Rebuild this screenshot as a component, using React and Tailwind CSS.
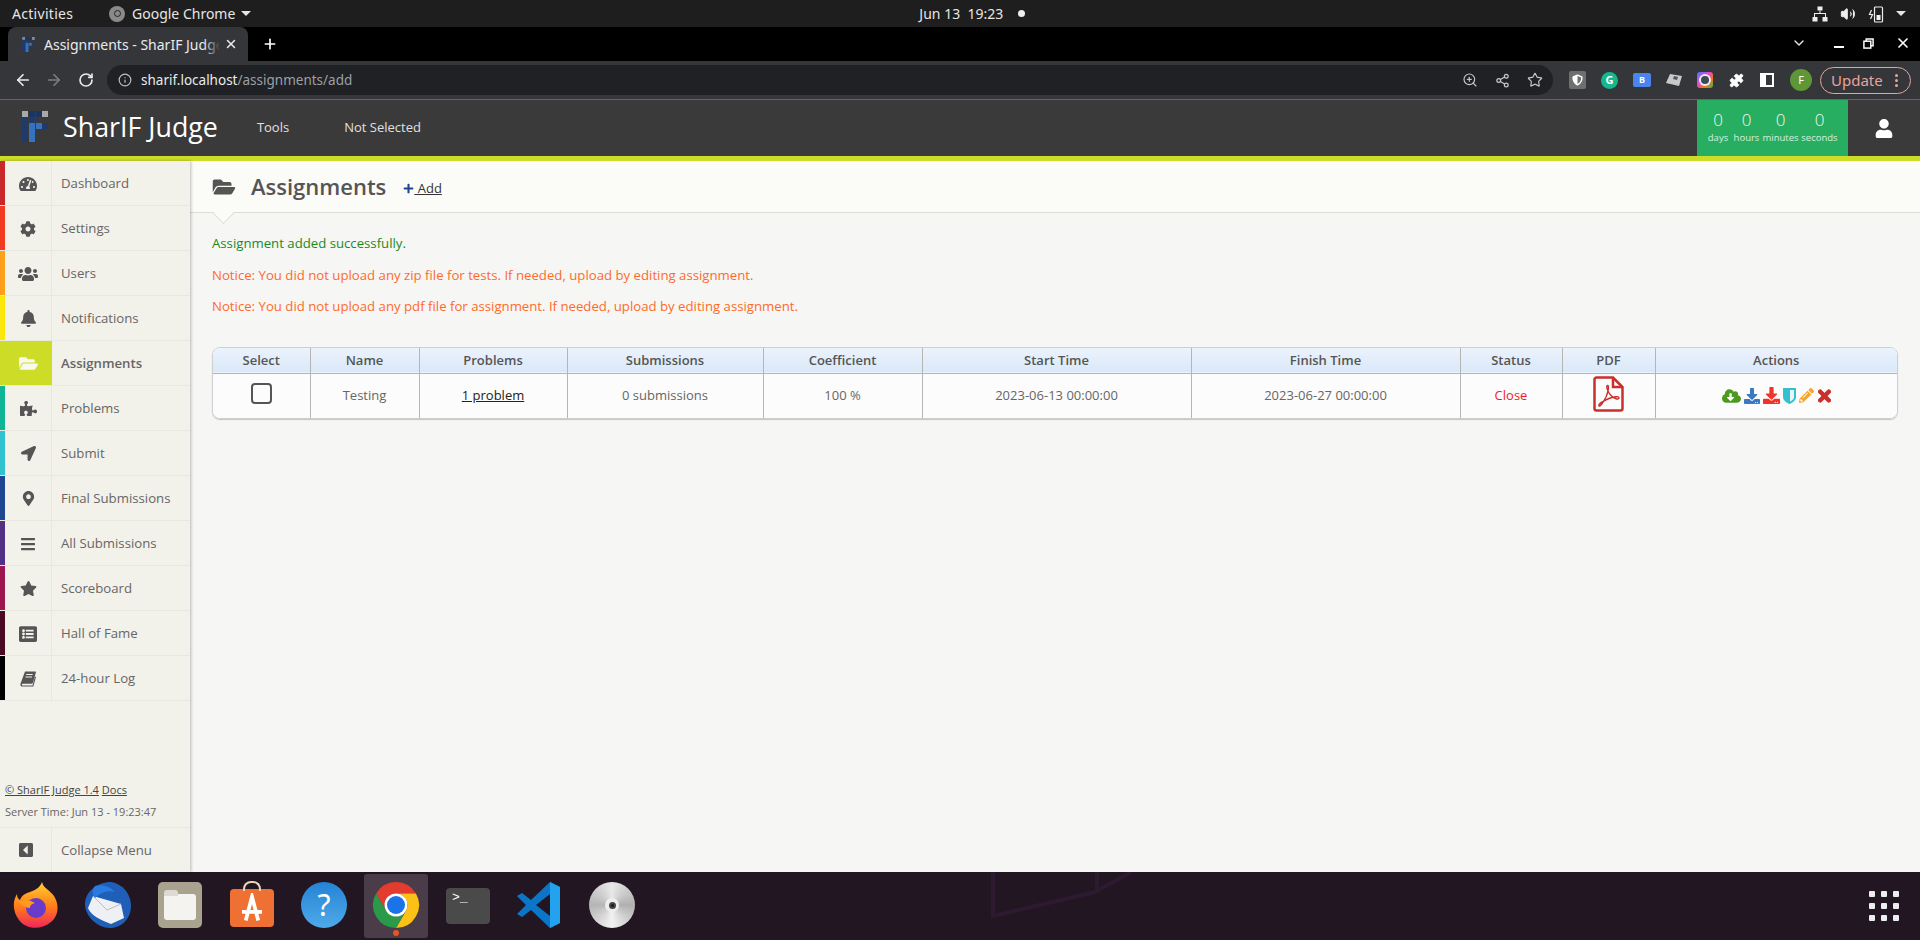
import {
  FaBars,
  FaBell,
  FaCaretSquareLeft,
  FaCloudDownloadAlt,
  FaCog,
  FaDownload,
  FaFolderOpen,
  FaListAlt,
  FaLocationArrow,
  FaMapMarkerAlt,
  FaPencilAlt,
  FaPlus,
  FaPuzzlePiece,
  FaShieldAlt,
  FaStar,
  FaTachometerAlt,
  FaTimes,
  FaUser,
  FaUsers,
} from "react-icons/fa";
import {
  ArrowLeft,
  ArrowRight,
  ChevronDown,
  Info,
  Plus,
  Puzzle,
  RotateCw,
  Share2,
  Star,
  Volume2,
  X,
  ZoomIn,
} from "lucide-react";

const sans = "font-['Open_Sans',sans-serif]";
const ui = "font-['Noto_Sans',sans-serif]";

function BookIcon({ size }) {
  return (
    <svg viewBox="0 0 16 16" width={size} height={size} fill="currentColor">
      <path d="M5 .5h10.200c.5 0 .8.4.7.9L13 11.500c-.2.8-.9 1.300-1.700 1.300H3.200c-.9 0-1.400.4-1.400.9s.5.8 1.400.8h9.300l2.500-9 1 .4-2.700 9.700H2.800C1.200 15.600 0 14.600.4 13z" />
      <path d="M6.200 3.500h6.500M5.500 6h6.500" stroke="#f2f1ea" strokeWidth="1" />
    </svg>
  );
}

const menu = [
  { label: "Dashboard", Icon: FaTachometerAlt, strip: "bg-[#c9282b]", size: 18 },
  { label: "Settings", Icon: FaCog, strip: "bg-[#f33b22]", size: 16 },
  { label: "Users", Icon: FaUsers, strip: "bg-[#ff9f1a]", size: 20 },
  { label: "Notifications", Icon: FaBell, strip: "bg-[#fbe80a]", size: 17 },
  { label: "Assignments", Icon: FaFolderOpen, strip: "bg-[#cddc27]", size: 19, active: true },
  { label: "Problems", Icon: FaPuzzlePiece, strip: "bg-[#10b595]", size: 17 },
  { label: "Submit", Icon: FaLocationArrow, strip: "bg-[#30c2cf]", size: 15 },
  { label: "Final Submissions", Icon: FaMapMarkerAlt, strip: "bg-[#1f4690]", size: 15 },
  { label: "All Submissions", Icon: FaBars, strip: "bg-[#532f85]", size: 16 },
  { label: "Scoreboard", Icon: FaStar, strip: "bg-[#9c1750]", size: 17 },
  { label: "Hall of Fame", Icon: FaListAlt, strip: "bg-[#4a0a20]", size: 18 },
  { label: "24-hour Log", Icon: BookIcon, strip: "bg-black", size: 16 },
];

const columns = [
  { label: "Select", width: "w-[97px]" },
  { label: "Name", width: "w-[109px]" },
  { label: "Problems", width: "w-[148px]" },
  { label: "Submissions", width: "w-[196px]" },
  { label: "Coefficient", width: "w-[159px]" },
  { label: "Start Time", width: "w-[269px]" },
  { label: "Finish Time", width: "w-[269px]" },
  { label: "Status", width: "w-[102px]" },
  { label: "PDF", width: "w-[93px]" },
  { label: "Actions", width: "" },
];

function Logo({ small }) {
  const dark = "#1f3a6b";
  const blue = "#3672bd";
  const grey = small ? "#7d8aa0" : "#a9a9a9";
  return (
    <svg viewBox="0 0 26 31" className={small ? "h-[15px] w-[13px]" : "h-[31px] w-[26px]"}>
      <rect x="0" y="0" width="6" height="6" fill={grey} />
      <rect x="7" y="0" width="6" height="6" fill="#1c3560" />
      <rect x="14" y="0" width="6" height="6" fill="#1c3560" />
      <rect x="20" y="0" width="6" height="6" fill={grey} />
      <rect x="0" y="6" width="6" height="25" fill={dark} />
      <rect x="7" y="6" width="6" height="6" fill={dark} />
      <rect x="7" y="12" width="6" height="19" fill={blue} />
      <rect x="14" y="12" width="6" height="6" fill={blue} />
      <rect x="20" y="12" width="6" height="6" fill={dark} />
    </svg>
  );
}

function SystemBar() {
  return (
    <div className={`flex h-[27px] items-center bg-[#1e1e1e] pl-[12px] pr-[14px] text-[14px] text-[#e6e6e6] ${ui}`}>
      <span className="w-[97px] tracking-[0.3px]">Activities</span>
      <span className="flex h-[16px] w-[16px] items-center justify-center rounded-full bg-[#8a8a8a]">
        <span className="h-[7px] w-[7px] rounded-full border border-[#222]" />
      </span>
      <span className="ml-[7px]">Google Chrome</span>
      <span className="ml-[6px] h-0 w-0 border-x-[5px] border-t-[5px] border-x-transparent border-t-[#e6e6e6]" />
      <span className="ml-[668px]">Jun 13&nbsp;&nbsp;19:23</span>
      <span className="ml-[15px] h-[7px] w-[7px] rounded-full bg-[#eee]" />
      <div className="ml-auto flex items-center gap-[12px]">
        <svg viewBox="0 0 16 16" className="h-[16px] w-[16px]" fill="#eee">
          <rect x="5.5" y="0.5" width="5" height="4" />
          <rect x="0.5" y="11" width="5" height="4.5" />
          <rect x="10.5" y="11" width="5" height="4.5" />
          <path d="M7.5 4.5h1V7H14v4h-1V8H3v3H2V7h5.5z" />
        </svg>
        <Volume2 className="h-[16px] w-[16px]" fill="#eee" strokeWidth={1.5} />
        <svg viewBox="0 0 16 18" className="h-[18px] w-[16px]" fill="none" stroke="#eee" strokeWidth="1.2">
          <rect x="6.5" y="2" width="8" height="15" rx="1" />
          <rect x="8.5" y="10" width="4" height="5" fill="#eee" stroke="none" />
          <path d="M3.5 5 1.5 9.500h3L2.500 14" />
        </svg>
        <span className="h-0 w-0 border-x-[5px] border-t-[5px] border-x-transparent border-t-[#e6e6e6]" />
      </div>
    </div>
  );
}

function TabStrip() {
  return (
    <div className={`flex h-[34px] items-end bg-black pl-[8px] text-[#e8eaed] ${ui}`}>
      <div className="flex h-[34px] w-[240px] items-center rounded-t-[8px] bg-[#35363a] pl-[14px] pr-[10px] text-[14px]">
        <Logo small />
        <span className="relative ml-[9px] w-[176px] overflow-hidden whitespace-nowrap">
          Assignments - SharIF Judge
          <span className="absolute inset-y-0 right-0 w-[16px] bg-gradient-to-r from-transparent to-[#35363a]" />
        </span>
        <X className="ml-auto h-[14px] w-[14px]" strokeWidth={2.5} />
      </div>
      <Plus className="mb-[9px] ml-[14px] h-[16px] w-[16px] text-white" strokeWidth={2.5} />
      <div className="mb-[10px] ml-auto flex items-center">
        <ChevronDown className="mr-[27px] h-[16px] w-[16px]" strokeWidth={2} />
        <span className="mr-[19px] mt-[8px] h-[2px] w-[10px] bg-white" />
        <svg viewBox="0 0 12 12" className="mr-[21px] h-[11px] w-[11px]" fill="none" stroke="#fff" strokeWidth="1.6">
          <rect x="1" y="3.500" width="7.500" height="7.500" />
          <path d="M3.500 3.500V1H11v7.500H8.500" />
        </svg>
        <X className="mr-[9px] h-[16px] w-[16px] text-white" strokeWidth={2.5} />
      </div>
    </div>
  );
}

function Toolbar() {
  return (
    <div className={`flex h-[39px] items-center border-b border-[#666] bg-[#35363a] pl-[14px] pr-[9px] ${ui}`}>
      <ArrowLeft className="h-[18px] w-[18px] text-[#e8eaed]" strokeWidth={2.25} />
      <ArrowRight className="ml-[13px] h-[18px] w-[18px] text-[#7d7e82]" strokeWidth={2.25} />
      <RotateCw className="ml-[15px] h-[16px] w-[16px] text-[#e8eaed]" strokeWidth={2.5} />
      <div className="ml-[13px] flex h-[30px] w-[1446px] items-center rounded-full bg-[#202124] pl-[11px] pr-[10px]">
        <Info className="h-[14px] w-[14px] text-[#bdc1c6]" strokeWidth={2} />
        <span className="ml-[9px] text-[13.5px] text-[#e8eaed]">
          sharif.localhost<span className="text-[#9aa0a6]">/assignments/add</span>
        </span>
        <div className="ml-auto flex items-center gap-[17px] text-[#c4c7cb]">
          <ZoomIn className="h-[16px] w-[16px]" strokeWidth={1.75} />
          <Share2 className="h-[15px] w-[15px]" strokeWidth={2} />
          <Star className="h-[16px] w-[16px]" strokeWidth={1.75} />
        </div>
      </div>
      <div className="ml-[16px] flex items-center gap-[15px]">
        <span className="flex h-[18px] w-[17px] items-center justify-center rounded-[2px] bg-[#6f6f6f]">
          <FaShieldAlt className="h-[12px] w-[11px] text-white" />
        </span>
        <span className={`flex h-[17px] w-[17px] items-center justify-center rounded-full bg-[#15b78f] text-[11px] font-bold text-white ${sans}`}>
          G
        </span>
        <span className="flex h-[14px] w-[18px] items-center justify-center rounded-[2px] bg-[#4a84f0] text-[9px] font-bold text-white">
          B
        </span>
        <svg viewBox="0 0 16 14" className="h-[14px] w-[16px]">
          <path d="M4 1 16 3l-3 10L0 10z" fill="#c9c9c9" />
          <path d="M8 3l4 1-1 3-4-1z" fill="#555" />
        </svg>
        <svg viewBox="0 0 16 16" className="h-[16px] w-[16px]">
          <defs>
            <linearGradient id="lens" x1="0" y1="0" x2="1" y2="1">
              <stop offset="0" stopColor="#3b82f6" />
              <stop offset="0.35" stopColor="#d946ef" />
              <stop offset="0.7" stopColor="#f97316" />
              <stop offset="1" stopColor="#22c55e" />
            </linearGradient>
          </defs>
          <rect width="16" height="16" rx="3" fill="url(#lens)" />
          <circle cx="8" cy="8" r="6" fill="#eee" />
          <circle cx="8" cy="8" r="4" fill="#3b4a5a" />
        </svg>
        <Puzzle className="ml-[1px] h-[15px] w-[15px] text-white" fill="#fff" strokeWidth={1.5} />
        <span className="ml-[1px] flex h-[14px] w-[14px] justify-end bg-white p-[2px] pl-[6px]">
          <span className="h-full w-full bg-[#35363a]" />
        </span>
      </div>
      <span className="ml-[16px] flex h-[22px] w-[22px] items-center justify-center rounded-full bg-[#5f9636] text-[11px] text-white">
        F
      </span>
      <div className="ml-[8px] flex h-[27px] w-[91px] items-center rounded-full border border-[#e8a49c] pl-[10px] text-[15px] text-[#e8a49c]">
        Update
        <span className="ml-[12px] flex flex-col gap-[2px]">
          <span className="h-[3px] w-[3px] rounded-full bg-[#e8a49c]" />
          <span className="h-[3px] w-[3px] rounded-full bg-[#e8a49c]" />
          <span className="h-[3px] w-[3px] rounded-full bg-[#e8a49c]" />
        </span>
      </div>
    </div>
  );
}

function Countdown() {
  const parts = [
    { label: "days", width: "w-[28px]" },
    { label: "hours", width: "w-[27px]" },
    { label: "minutes", width: "w-[39px]" },
    { label: "seconds", width: "w-[37px]" },
  ];
  return (
    <div className="flex h-[56px] w-[151px] items-center justify-center gap-[1px] bg-[#27ae60] pb-[4px] pr-[3px] text-[#f0faf3]">
      {parts.map((p) => (
        <div key={p.label} className={`flex flex-col items-center ${p.width}`}>
          <span className="text-[17px] font-light leading-[22px]">0</span>
          <span className="whitespace-nowrap text-[9.5px] leading-[13px] text-[#d5f0e0]">{p.label}</span>
        </div>
      ))}
    </div>
  );
}

function SiteHeader() {
  return (
    <header className={`flex h-[61px] flex-col ${sans}`}>
      <div className="flex h-[56px] items-start bg-[#3a3a3a] pl-[22px]">
        <div className="mt-[11px]">
          <Logo />
        </div>
        <span className="ml-[15px] mt-[9px] text-[26.8px] leading-[36px] text-white">SharIF Judge</span>
        <span className="ml-[39px] mt-[18px] text-[13px] leading-[18px] text-[#e0e0e0]">Tools</span>
        <span className="ml-[55px] mt-[18px] text-[13px] leading-[18px] text-[#e0e0e0]">Not Selected</span>
        <div className="ml-auto flex">
          <Countdown />
          <div className="flex h-[56px] w-[72px] items-center justify-center">
            <FaUser className="h-[19px] w-[18px] text-white" />
          </div>
        </div>
      </div>
      <div className="h-[5px] bg-[#cddc27]" />
    </header>
  );
}

function Sidebar() {
  return (
    <aside className={`z-10 flex w-[190px] shrink-0 flex-col bg-[#f2f1ea] shadow-[1px_0_3px_rgba(0,0,0,0.25)] ${sans}`}>
      {menu.map(({ label, Icon, strip, size, active }) => (
        <div key={label} className="flex h-[45px] border-b border-[#e8e8e0]">
          <span className={`w-[5px] ${strip}`} />
          <span
            className={`flex w-[47px] items-center justify-center border-r border-[#e8e8e0] pt-[1px] ${
              active ? "border-r-0 bg-[#cddc27] text-[#f8f8ee]" : "text-[#555]"
            }`}
          >
            <Icon size={size} />
          </span>
          <span className={`flex items-center pl-[9px] pt-[2px] text-[13.2px] text-[#666] ${active ? "font-semibold" : ""}`}>
            {label}
          </span>
        </div>
      ))}
      <div className="mt-auto pl-[5px] text-[11px] text-[#666]">
        <p className="leading-[14px] text-[#444]">
          <span className="underline">© SharIF Judge 1.4</span> <span className="underline">Docs</span>
        </p>
        <p className="mt-[8px] leading-[14px]">Server Time: Jun 13 - 19:23:47</p>
      </div>
      <div className="mt-[8px] flex h-[45px] border-t border-[#e8e8e0] text-[#555]">
        <span className="flex w-[52px] items-center justify-center border-r border-[#e8e8e0]">
          <FaCaretSquareLeft size={16} />
        </span>
        <span className="flex items-center pl-[9px] pt-[1px] text-[13.2px] text-[#666]">Collapse Menu</span>
      </div>
    </aside>
  );
}

function PdfIcon() {
  return (
    <svg viewBox="0 0 31 36" className="mx-auto h-[36px] w-[31px]" fill="none" stroke="#c9302c">
      <path d="M3.500 1.500H20L29.500 11v21.500a2 2 0 0 1-2 2h-24a2 2 0 0 1-2-2v-29a2 2 0 0 1 2-2z" strokeWidth="2.5" />
      <path d="M20 1.500V11h9.500" strokeWidth="2.5" />
      <path d="M6 30c-1-2 4-5 10-7.500 5-2 10-2.500 10-.5s-5 1-8.500-3C14 15 13 10 14.500 9.500 16 9 16 14 13 21c-2.500 5-6 10-7 9z" strokeWidth="1.4" />
    </svg>
  );
}

function ShieldIcon() {
  return (
    <svg viewBox="0 0 13 16" className="h-[16px] w-[13px]">
      <path d="M0 0h13v9c0 3-3 5.500-6.500 7C3 14.500 0 12 0 9z" fill="#35c0d0" />
      <path d="M7 2h4v7c0 2-2 3.500-4 4.500z" fill="#e6f7f9" />
    </svg>
  );
}

function AssignmentsTable() {
  const cell = "border-l border-[#b5b5b5] first:border-l-0";
  return (
    <div className="mt-[32px] overflow-hidden rounded-[8px] border border-[#cfcfcf] shadow-[0_1px_1px_rgba(0,0,0,0.2)]">
      <table className="w-full table-fixed border-collapse bg-[#fcfcfc] text-center text-[13px]">
        <thead>
          <tr className="h-[25px] border-b border-[#b5b5b5] bg-gradient-to-b from-[#ebf3fd] to-[#dae8f8]">
            {columns.map((c) => (
              <th key={c.label} className={`${cell} ${c.width} font-semibold text-[#555]`}>
                {c.label}
              </th>
            ))}
          </tr>
        </thead>
        <tbody>
          <tr className="h-[45px] text-[#666]">
            <td className={`${cell} pb-[4px]`}>
              <span className="mx-auto block h-[21px] w-[21px] rounded-[4px] border-2 border-[#555]" />
            </td>
            <td className={cell}>Testing</td>
            <td className={`${cell} text-[#222] underline`}>1 problem</td>
            <td className={cell}>0 submissions</td>
            <td className={cell}>100 %</td>
            <td className={cell}>2023-06-13 00:00:00</td>
            <td className={cell}>2023-06-27 00:00:00</td>
            <td className={`${cell} text-[#f01c1c]`}>Close</td>
            <td className={`${cell} pb-[4px]`}>
              <PdfIcon />
            </td>
            <td className={cell}>
              <div className="flex items-center justify-center gap-[3px]">
                <FaCloudDownloadAlt className="h-[16px] w-[19px] text-[#4b9a1e]" />
                <FaDownload className="h-[16px] w-[16px] text-[#3b78c4]" />
                <FaDownload className="h-[17px] w-[17px] text-[#f0342a]" />
                <ShieldIcon />
                <FaPencilAlt className="h-[15px] w-[15px] text-[#f7a531]" />
                <FaTimes className="ml-[1px] h-[18px] w-[13px] text-[#c9302c]" stroke="currentColor" strokeWidth={30} />
              </div>
            </td>
          </tr>
        </tbody>
      </table>
    </div>
  );
}

function Content() {
  return (
    <main className={`flex min-w-0 flex-1 flex-col bg-[#f6f6f4] ${sans}`}>
      <div className="relative flex h-[52px] items-center border-b border-[#dcdcd8] bg-[#fbfbf8] pl-[22px]">
        <FaFolderOpen className="h-[20px] w-[24px] text-[#555]" />
        <h1 className="ml-[15px] mt-[-2px] text-[22px] font-semibold leading-[32px] text-[#555]">Assignments</h1>
        <span className="ml-[17px] mt-[4px] flex items-center text-[13px] text-[#333] underline">
          <FaPlus className="h-[11px] w-[11px] text-[#1f4690]" />
          <span>&nbsp;Add</span>
        </span>
        <span className="absolute left-[26px] top-[45px] h-[15px] w-[15px] rotate-45 border-b border-r border-[#dcdcd8] bg-[#fbfbf8]" />
      </div>
      <div className="flex flex-1 flex-col pl-[22px] pr-[22px] pt-[21px] text-[13.2px]">
        <p className="leading-[18px] text-[#1a8a1a]">Assignment added successfully.</p>
        <p className="mt-[14px] leading-[18px] text-[#ff6a2b]">
          Notice: You did not upload any zip file for tests. If needed, upload by editing assignment.
        </p>
        <p className="mt-[13px] leading-[18px] text-[#ff6a2b]">
          Notice: You did not upload any pdf file for assignment. If needed, upload by editing assignment.
        </p>
        <AssignmentsTable />
      </div>
    </main>
  );
}

function ChromeIcon() {
  return (
    <svg viewBox="0 0 48 48" className="h-[48px] w-[48px]">
      <path d="M24 1A23 23 0 0 1 43.920 12.500H24A11.500 11.500 0 0 0 14 29.750L4.080 12.500A23 23 0 0 1 24 1Z" fill="#e33b2e" />
      <path d="M43.920 12.500A23 23 0 0 1 24 47L34 29.750A11.500 11.500 0 0 0 24 12.500Z" fill="#fbc116" />
      <path d="M4.080 12.500A23 23 0 0 0 24 47L34 29.750A11.500 11.500 0 0 1 14 29.750Z" fill="#2a9a48" />
      <circle cx="24" cy="24" r="11.500" fill="#fff" />
      <circle cx="24" cy="24" r="9" fill="#1a73e8" />
    </svg>
  );
}

function Dock() {
  return (
    <footer className="relative flex h-[68px] items-start bg-[#221622] pl-[13px] pt-[10px]">
      <svg viewBox="0 0 150 50" className="absolute left-[985px] top-0 h-[50px] w-[150px]" fill="none" stroke="#2d1a30" strokeWidth="4">
        <path d="M8 0v44L110 20 146 0M112 20V0" />
      </svg>
      <div className="relative flex items-center gap-[26px]">
        <svg viewBox="0 0 46 46" className="h-[46px] w-[46px]">
          <defs>
            <linearGradient id="fox" x1="0" y1="0" x2="0" y2="1">
              <stop offset="0" stopColor="#ffcf2e" />
              <stop offset="0.55" stopColor="#ff7a1a" />
              <stop offset="1" stopColor="#f0265a" />
            </linearGradient>
          </defs>
          <path d="M29 0c1 6 8 8 12 14 6 10 4 20-3 26-9 8-25 8-32-2C0 30-1 20 4 12c0 3 1 5 3 6 2-5 6-7 10-8 5-2 10-4 12-10z" fill="url(#fox)" />
          <circle cx="23" cy="26" r="10" fill="#6a3bc8" />
          <path d="M6 20c5-3 12-2 16 1-4 1-5 3-5 5-3 0-7-2-11-6z" fill="#ff9a1f" />
        </svg>
        <svg viewBox="0 0 46 46" className="h-[46px] w-[46px]">
          <path d="M26 0c12 2 20 12 20 24 0 13-10 22-21 22C12 46 0 34 0 22 0 10 12 0 26 0z" fill="#1f5fb8" />
          <path d="M8 14l28 8 3 14-13 6C16 38 6 34 3 26z" fill="#eef0f4" />
          <path d="M8 14l14 14 14-6" fill="none" stroke="#b7bcc6" strokeWidth="1" />
          <path d="M10 4c8-2 14 0 20 6-8-2-14 0-20 6-3-3-3-9 0-12z" fill="#2a7be0" />
        </svg>
        <span className="mx-[1px] flex h-[46px] w-[44px] items-center justify-center rounded-[5px] bg-[#a8a28f]">
          <span className="relative mt-[3px] h-[26px] w-[32px] rounded-[3px] bg-[#f4f3ef]">
            <span className="absolute left-0 top-[-4px] h-[6px] w-[14px] rounded-t-[3px] bg-[#dcdad2]" />
          </span>
        </span>
        <span className="relative mx-[1px] flex h-[38px] w-[44px] translate-y-[3px] items-center justify-center rounded-[4px] bg-[#ef7033]">
          <span className="absolute left-[13px] top-[-8px] h-[10px] w-[18px] rounded-t-[8px] border-2 border-b-0 border-[#e9d8b8]" />
          <svg viewBox="0 0 24 24" className="h-[30px] w-[30px]" fill="none" stroke="#fff" strokeWidth="3">
            <path d="M7 22 12 3l5 19M4 15h16" />
          </svg>
        </span>
        <span className="flex h-[46px] w-[46px] items-center justify-center rounded-full bg-gradient-to-b from-[#2483d6] to-[#4eaae8] text-[30px] leading-none text-white">
          ?
        </span>
        <span className="relative flex h-[46px] w-[46px] items-center justify-center">
          <span className="absolute left-[-9px] top-[-8px] h-[64px] w-[64px] rounded-[3px] bg-[#4a3c48]" />
          <span className="relative">
            <ChromeIcon />
          </span>
          <span className="absolute bottom-[-8px] left-[20px] h-[6px] w-[6px] rounded-full bg-[#e95420]" />
        </span>
        <span className="mx-[1px] flex h-[36px] w-[44px] translate-y-[1px] items-start rounded-[4px] bg-[#4a4a4a] pl-[6px] pt-[3px] font-['Liberation_Mono',monospace] text-[13px] leading-[14px] text-white">
          &gt;_
        </span>
        <svg viewBox="0 0 46 46" className="h-[46px] w-[46px]">
          <path d="M33 0 14 18 5 11 0 14l9 9-9 9 5 3 9-7 19 18 10-5V5z" fill="#0b76c8" />
          <path d="M33 0l10 5v36l-10 5z" fill="#23a3ee" />
          <path d="M33 12 19 23l14 11z" fill="#221622" />
        </svg>
        <span className="flex h-[46px] w-[46px] items-center justify-center rounded-full bg-[conic-gradient(#e8e8e8,#b0b0b0,#f2f2f2,#b5b5b5,#e8e8e8)]">
          <span className="flex h-[14px] w-[14px] items-center justify-center rounded-full bg-[#eee]">
            <span className="h-[7px] w-[7px] rounded-full border-2 border-[#444] bg-[#221622]" />
          </span>
        </span>
      </div>
      <div className="absolute right-[21px] top-[19px] grid grid-cols-3 gap-[6px]">
        {[0, 1, 2, 3, 4, 5, 6, 7, 8].map((n) => (
          <span key={n} className="h-[6px] w-[6px] rounded-[1px] bg-[#eeeeee]" />
        ))}
      </div>
    </footer>
  );
}

export default function App() {
  return (
    <div className="flex h-[940px] w-[1920px] flex-col overflow-hidden">
      <SystemBar />
      <TabStrip />
      <Toolbar />
      <SiteHeader />
      <div className="flex min-h-0 flex-1">
        <Sidebar />
        <Content />
      </div>
      <Dock />
    </div>
  );
}
